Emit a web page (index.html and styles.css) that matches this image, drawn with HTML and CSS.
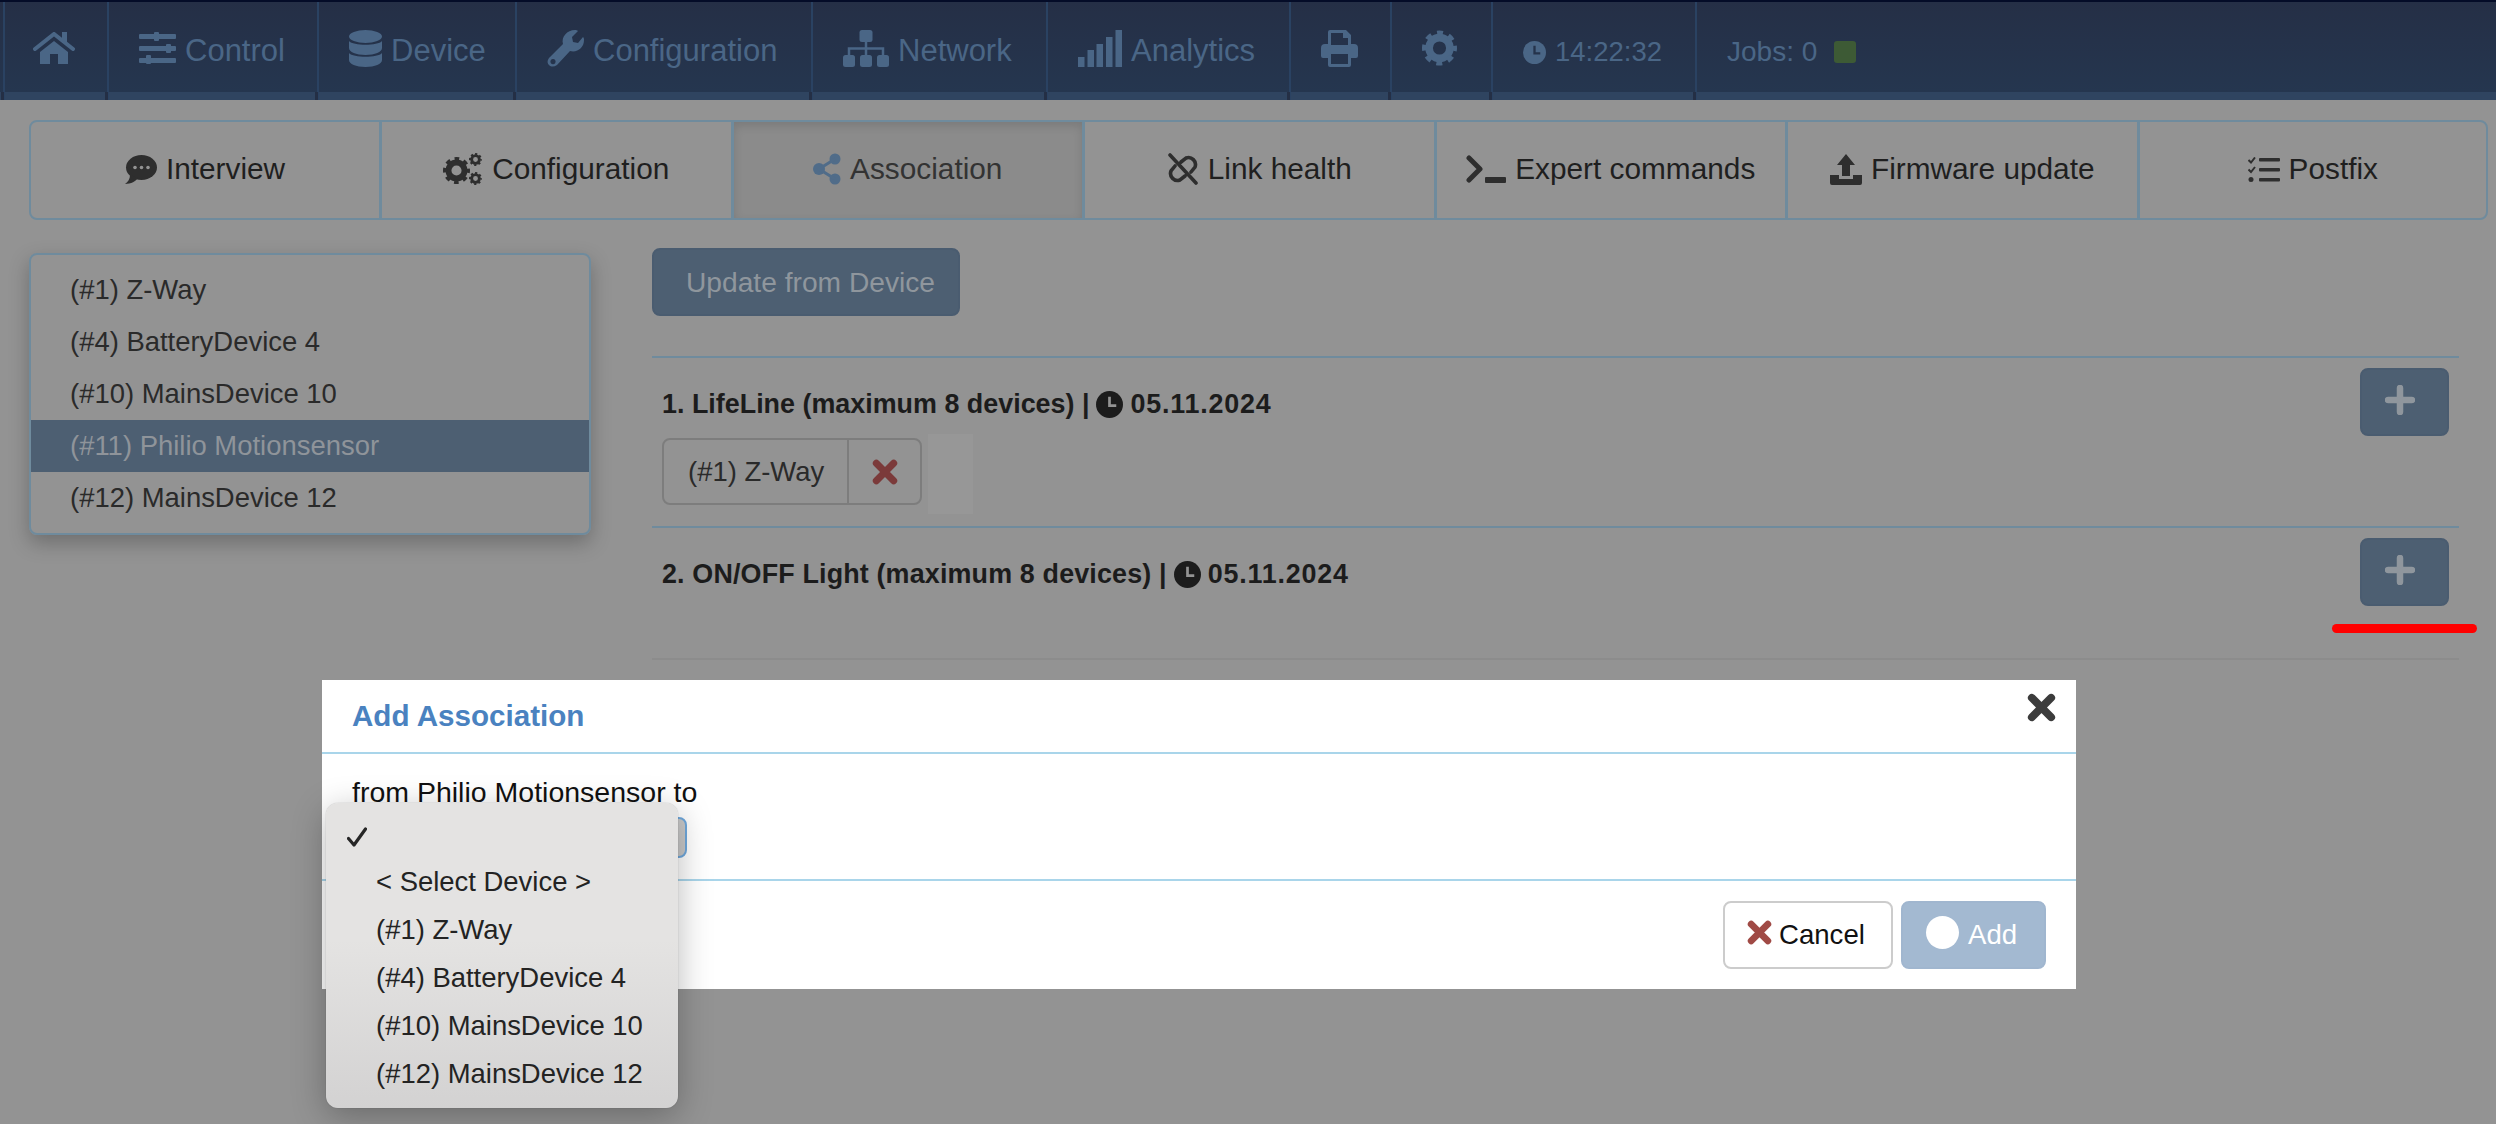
FILE: index.html
```html
<!DOCTYPE html>
<html lang="en">
<head>
<meta charset="utf-8">
<title>Association</title>
<link rel="stylesheet" href="styles.css">
</head>
<body>
<svg class="defs" aria-hidden="true">
  <defs>
    <symbol id="gear" viewBox="0 0 32 32">
      <circle cx="16" cy="16" r="9.5" fill="none" stroke="currentColor" stroke-width="7"/>
      <circle cx="16" cy="16" r="13.5" fill="none" stroke="currentColor" stroke-width="5" stroke-dasharray="5.3 5.3" stroke-dashoffset="2.6"/>
    </symbol>
    <symbol id="cross" viewBox="0 0 24 24">
      <path d="M4 4 L20 20 M20 4 L4 20" fill="none" stroke="currentColor" stroke-width="6.5" stroke-linecap="round"/>
    </symbol>
    <symbol id="plus" viewBox="0 0 30 30">
      <path d="M15 3 V27 M3 15 H27" fill="none" stroke="currentColor" stroke-width="6.5" stroke-linecap="round"/>
    </symbol>
  </defs>
</svg>

<header class="navbar">
  <a class="nav-item nav-home">
    <svg class="ic ic-home" viewBox="0 0 42 32"><path d="M2 17 L21 2 L40 17" fill="none" stroke="currentColor" stroke-width="4" stroke-linecap="round"/><rect x="29" y="0" width="5" height="11" fill="currentColor"/><path d="M7 20 L21 9 L35 20 V32 H25 V22 H17 V32 H7 Z" fill="currentColor"/></svg>
  </a>
  <a class="nav-item">
    <svg class="ic ic-sliders" viewBox="0 0 37 32"><g fill="currentColor"><rect x="0" y="2" width="37" height="5" rx="1"/><rect x="0" y="14" width="37" height="5" rx="1"/><rect x="0" y="26" width="37" height="5" rx="1"/><rect x="15" y="0" width="5" height="9" rx="1"/><rect x="27" y="12" width="5" height="9" rx="1"/><rect x="7" y="23" width="5" height="9" rx="1"/></g></svg>
    Control
  </a>
  <a class="nav-item">
    <svg class="ic ic-db" viewBox="0 0 33 37"><g fill="currentColor"><ellipse cx="16.5" cy="6.5" rx="16.5" ry="6.5"/><path d="M0 11 C4 16 29 16 33 11 V18 C33 22 26 25 16.5 25 S0 22 0 18 Z"/><path d="M0 23 C4 28 29 28 33 23 V30 C33 34 26 37 16.5 37 S0 34 0 30 Z"/></g></svg>
    Device
  </a>
  <a class="nav-item">
    <svg class="ic ic-wrench" viewBox="0 0 37 37"><path fill="currentColor" fill-rule="evenodd" d="M3 27 L16 14 C14 7 20 0 28 0 C29 0 30 0 31 1 L25 7 L26 12 L31 13 L36 7 C37 8 37 9 37 10 C37 18 30 23 23 21 L10 35 C7 37 4 37 2 35 C0 33 0 30 3 27 Z M6 29 A2.6 2.6 0 1 0 6.01 29 Z"/></svg>
    Configuration
  </a>
  <a class="nav-item">
    <svg class="ic ic-sitemap" viewBox="0 0 46 37"><g fill="currentColor"><rect x="16.500" y="0" width="13" height="12" rx="2.500"/><rect x="0" y="25" width="12" height="12" rx="2.500"/><rect x="17" y="25" width="12" height="12" rx="2.500"/><rect x="34" y="25" width="12" height="12" rx="2.500"/></g><path d="M23 12 V25 M6 25 V18.500 H40 V25" fill="none" stroke="currentColor" stroke-width="2.500"/></svg>
    Network
  </a>
  <a class="nav-item">
    <svg class="ic ic-signal" viewBox="0 0 44 37"><g fill="currentColor"><rect x="0" y="27" width="6.500" height="10"/><rect x="9.500" y="20" width="6.500" height="17"/><rect x="18.500" y="14" width="6.500" height="23"/><rect x="28" y="7" width="6.500" height="30"/><rect x="37.500" y="0" width="6.500" height="37"/></g></svg>
    Analytics
  </a>
  <a class="nav-item">
    <svg class="ic ic-print" viewBox="0 0 37 37"><path fill="currentColor" fill-rule="evenodd" d="M7 2 A2 2 0 0 1 9 0 H25 L30 5 V14 H33 A4 4 0 0 1 37 18 V26 A2 2 0 0 1 35 28 H30 V35 A2 2 0 0 1 28 37 H9 A2 2 0 0 1 7 35 V28 H2 A2 2 0 0 1 0 26 V18 A4 4 0 0 1 4 14 H7 Z M10 3 V15 H27 V8 H22 V3 Z M10 24 V34 H27 V24 Z"/></svg>
  </a>
  <a class="nav-item">
    <svg class="ic ic-gear"><use href="#gear"/></svg>
  </a>
  <div class="nav-item nav-clock">
    <svg class="ic ic-clock" viewBox="0 0 24 24"><circle cx="12" cy="12" r="12" fill="currentColor"/><path d="M12 5 V13 H18" class="hand-nav"/></svg>
    14:22:32
  </div>
  <div class="nav-item nav-jobs">Jobs: 0 <span class="job-led"></span></div>
</header>

<nav class="tabs">
  <a class="tab">
    <svg class="ic ic-comment" viewBox="0 0 32 29"><ellipse cx="16.500" cy="12.500" rx="15.500" ry="12.500" fill="currentColor"/><path d="M5 20 C5 24 3 27 0 29 C6 29 11 26 13 23 Z" fill="currentColor"/><g class="dots"><circle cx="10" cy="12.500" r="1.800"/><circle cx="16.500" cy="12.500" r="1.800"/><circle cx="23" cy="12.500" r="1.800"/></g></svg>
    Interview
  </a>
  <a class="tab">
    <svg class="ic ic-cogs" viewBox="0 0 40 32"><use href="#gear" x="0" y="4" width="27" height="27"/><use href="#gear" x="26" y="0" width="13" height="13"/><use href="#gear" x="26" y="19" width="13" height="13"/></svg>
    Configuration
  </a>
  <a class="tab tab-active">
    <svg class="ic ic-share" viewBox="0 0 28 32"><g fill="currentColor"><circle cx="22" cy="6" r="5.500"/><circle cx="6" cy="16" r="6"/><circle cx="22" cy="26" r="5.500"/></g><path d="M22 6 L6 16 L22 26" fill="none" stroke="currentColor" stroke-width="3"/></svg>
    Association
  </a>
  <a class="tab">
    <svg class="ic ic-unlink" viewBox="0 0 32 32"><path d="M3 2 L29 30 M14 9 L19 5 A7 7 0 0 1 28 14 L24 19 M18 23 L13 27 A7 7 0 0 1 4 18 L8 13" fill="none" stroke="currentColor" stroke-width="3.600" stroke-linecap="round"/></svg>
    Link health
  </a>
  <a class="tab">
    <svg class="ic ic-terminal" viewBox="0 0 40 28"><path d="M3 3 L14 14 L3 25" fill="none" stroke="currentColor" stroke-width="5" stroke-linecap="round" stroke-linejoin="round"/><rect x="19" y="22" width="21" height="6" rx="1" fill="currentColor"/></svg>
    Expert commands
  </a>
  <a class="tab">
    <svg class="ic ic-upload" viewBox="0 0 32 31"><path fill="currentColor" d="M16 0 L25 11 H20 V22 H12 V11 H7 Z"/><path fill="currentColor" d="M0 21 H9 V25 H23 V21 H32 V29 A2 2 0 0 1 30 31 H2 A2 2 0 0 1 0 29 Z"/></svg>
    Firmware update
  </a>
  <a class="tab">
    <svg class="ic ic-tasks" viewBox="0 0 32 25"><g fill="currentColor"><rect x="11" y="1" width="21" height="3.600" rx="1"/><rect x="11" y="11" width="21" height="3.600" rx="1"/><rect x="11" y="21" width="21" height="3.600" rx="1"/><circle cx="3" cy="22.500" r="2.500"/></g><path d="M0.500 3 L3 5.500 L7 0.500 M0.500 12.500 L3 15 L7 10" fill="none" stroke="currentColor" stroke-width="2"/></svg>
    Postfix
  </a>
</nav>

<main class="content">
  <aside class="devices">
    <ul class="device-list">
      <li>(#1) Z-Way</li>
      <li>(#4) BatteryDevice 4</li>
      <li>(#10) MainsDevice 10</li>
      <li class="selected">(#11) Philio Motionsensor</li>
      <li>(#12) MainsDevice 12</li>
    </ul>
  </aside>
  <section class="groups">
    <button class="btn-primary btn-update">Update from Device</button>
    <div class="group group-filled">
      <div class="group-title">1. LifeLine (maximum 8 devices) | <svg class="ic ic-stamp" viewBox="0 0 24 24"><circle cx="12" cy="12" r="12" fill="currentColor"/><path d="M12 5 V13 H18" class="hand-dim"/></svg> <span class="date">05.11.2024</span></div>
      <button class="btn-primary btn-add"><svg class="ic ic-plus"><use href="#plus"/></svg></button>
      <div class="chips">
        <div class="chip">
          <span class="chip-label">(#1) Z-Way</span>
          <span class="chip-remove"><svg class="ic ic-chip-x"><use href="#cross"/></svg></span>
        </div>
        <div class="chip-ghost"></div>
      </div>
    </div>
    <div class="group group-empty">
      <div class="group-title">2. ON/OFF Light (maximum 8 devices) | <svg class="ic ic-stamp" viewBox="0 0 24 24"><circle cx="12" cy="12" r="12" fill="currentColor"/><path d="M12 5 V13 H18" class="hand-dim"/></svg> <span class="date">05.11.2024</span></div>
      <button class="btn-primary btn-add"><svg class="ic ic-plus"><use href="#plus"/></svg></button>
      <div class="red-mark"></div>
    </div>
  </section>
</main>

<div class="modal">
  <div class="modal-head">
    <h3 class="modal-title">Add Association</h3>
    <svg class="ic ic-close"><use href="#cross"/></svg>
  </div>
  <div class="modal-body">
    <p class="modal-text">from Philio Motionsensor to</p>
    <div class="select-box"></div>
  </div>
  <div class="modal-foot">
    <button class="btn-cancel"><svg class="ic ic-cancel"><use href="#cross"/></svg>Cancel</button>
    <button class="btn-confirm"><span class="spinner"></span>Add</button>
  </div>
  <ul class="popup">
    <li class="popup-check"><svg class="ic ic-check" viewBox="0 0 20 20"><path d="M1.500 11.500 L7 18 L18.500 2" fill="none" stroke="currentColor" stroke-width="3.200" stroke-linecap="round" stroke-linejoin="round"/></svg></li>
    <li>&lt; Select Device &gt;</li>
    <li>(#1) Z-Way</li>
    <li>(#4) BatteryDevice 4</li>
    <li>(#10) MainsDevice 10</li>
    <li>(#12) MainsDevice 12</li>
  </ul>
</div>
</body>
</html>
```
FILE: styles.css
```css
* { box-sizing: border-box; }
html, body { margin: 0; padding: 0; }
body {
  width: 2496px;
  height: 1124px;
  position: relative;
  overflow: hidden;
  background: #939393;
  font-family: "Liberation Sans", Arial, sans-serif;
  color: #1f1f1f;
}
.defs { position: absolute; width: 0; height: 0; }
.ic { display: block; flex: none; }

/* navbar */
.navbar {
  height: 100px;
  display: grid;
  grid-template-columns: 104px 210px 198px 296px 235px 243px 101px 101px 204px 1fr;
  padding-left: 3px;
  border-top: 2px solid #040c28;
  background: linear-gradient(#252f46 0, #25364f 90px, #2f4460 90px);
  color: #4a6686;
  font-size: 31px;
}
.nav-item {
  position: relative;
  display: flex;
  align-items: center;
  gap: 9px;
  padding: 0 0 1px 30px;
  border-left: 2px solid #2a4262;
  white-space: nowrap;
}
.nav-item .ic { margin-top: -5px; }
.nav-item::after {
  content: "";
  position: absolute;
  left: -4px;
  bottom: 0;
  width: 3px;
  height: 8px;
  background: #242f45;
}
.nav-home { padding-left: 28px; }
.nav-clock { font-size: 27.5px; padding-top: 3px; }
.nav-clock .ic { margin-top: 0; }
.nav-jobs { font-size: 28px; padding-top: 3px; gap: 17px; }
.job-led {
  width: 22px;
  height: 22px;
  border-radius: 3px;
  background: #3d5a35;
}
.ic-home { width: 42px; height: 32px; }
.ic-sliders { width: 37px; height: 32px; }
.ic-db { width: 33px; height: 37px; }
.ic-wrench { width: 37px; height: 37px; }
.ic-sitemap { width: 46px; height: 37px; }
.ic-signal { width: 44px; height: 37px; }
.ic-print { width: 37px; height: 37px; }
.ic-gear { width: 35px; height: 36px; }
.ic-clock { width: 23px; height: 23px; }
.hand-nav { fill: none; stroke: #25334b; stroke-width: 2.4; }

/* tabs */
.tabs {
  display: grid;
  grid-template-columns: 351px repeat(5, 351.500px) 1fr;
  width: 2459px;
  height: 100px;
  margin: 20px 0 0 29px;
  border: 2px solid #6f8b9d;
  border-radius: 8px;
  overflow: hidden;
  font-size: 29.8px;
  color: #1f1f1f;
}
.tab {
  display: flex;
  align-items: center;
  justify-content: center;
  gap: 9px;
  padding-bottom: 2px;
  border-right: 3px solid #6f8b9d;
}
.tab:last-child { border-right: 0; }
.tab-active {
  background: #8b8b8b;
  box-shadow: inset 0 4px 10px rgba(0,0,0,.12);
  color: #333;
}
.tab .ic { color: #2e2e2e; }
.tab-active .ic-share { color: #506c89; }
.ic-comment { width: 32px; height: 29px; }
.dots { fill: #939393; }
.ic-cogs { width: 40px; height: 32px; }
.ic-share { width: 28px; height: 32px; }
.ic-unlink { width: 32px; height: 32px; }
.ic-terminal { width: 40px; height: 28px; }
.ic-upload { width: 32px; height: 31px; }
.ic-tasks { width: 32px; height: 25px; }

/* content */
.content {
  display: flex;
  gap: 61px;
  padding: 28px 37px 0 29px;
}
.devices { flex: 0 0 562px; padding-top: 5px; }
.device-list {
  list-style: none;
  margin: 0;
  padding: 9px 0;
  border: 2px solid #6f8b9d;
  border-radius: 8px;
  box-shadow: 0 8px 20px rgba(0,0,0,.25);
  font-size: 27.45px;
}
.device-list li {
  height: 52px;
  line-height: 52px;
  padding-left: 39px;
  color: #2a2a2a;
}
.device-list .selected { background: #4d5f72; color: #8f949a; }

.groups { flex: 1; min-width: 0; }
.btn-primary {
  display: flex;
  align-items: center;
  justify-content: center;
  border: 2px solid #4a5c70;
  border-radius: 8px;
  background: #4d5f72;
  color: #8f969d;
  font: inherit;
  padding: 0;
}
.btn-update { width: 308px; height: 68px; font-size: 28.2px; margin-bottom: 40px; padding-left: 9px; }
.group {
  display: grid;
  grid-template-columns: 1fr auto;
  align-content: start;
  padding: 10px 10px 0;
  border-top: 2px solid #6f8b9d;
}
.group-filled { height: 170px; }
.group-empty {
  position: relative;
  height: 134px;
  border-bottom: 2px solid #8c8c8c;
}
.group-title {
  display: flex;
  align-items: center;
  gap: 7px;
  height: 68px;
  padding-top: 4px;
  font-size: 26.9px;
  font-weight: 700;
  color: #1c1c1c;
}
.group-empty .group-title { letter-spacing: .15px; }
.date { letter-spacing: .8px; }
.group-empty .date { letter-spacing: .8px; }
.ic-stamp { width: 27px; height: 27px; color: #1c1c1c; }
.hand-dim { fill: none; stroke: #939393; stroke-width: 2.4; }
.btn-add { width: 89px; height: 68px; padding: 0 9px 5px 0; }
.ic-plus { width: 30px; height: 30px; color: #8f969d; }
.chips { display: flex; align-items: center; grid-column: 1 / 3; margin-top: -2px; }
.chip {
  display: flex;
  width: 260px;
  height: 67px;
  margin-bottom: 5px;
  border: 2px solid #7d7d7d;
  border-radius: 8px;
  font-size: 27.45px;
  color: #2a2a2a;
}
.chip-label {
  display: flex;
  align-items: center;
  width: 185px;
  padding-left: 24px;
  border-right: 2px solid #7d7d7d;
}
.chip-remove { flex: 1; display: flex; align-items: center; justify-content: center; }
.ic-chip-x { width: 26px; height: 26px; color: #7b3a3a; }
.chip-ghost { width: 45px; height: 80px; margin-left: 6px; background: #979797; }
.red-mark {
  position: absolute;
  left: 1680px;
  top: 96px;
  width: 145px;
  height: 9px;
  border-radius: 5px;
  background: #ff0000;
}

/* modal */
.modal {
  position: absolute;
  left: 322px;
  top: 680px;
  width: 1754px;
  height: 309px;
  background: #fff;
  color: #111;
}
.modal-head {
  display: flex;
  justify-content: space-between;
  height: 74px;
  padding: 0 20px 0 30px;
  border-bottom: 2px solid #a9d5ea;
}
.modal-title {
  margin: 0;
  padding-top: 19px;
  font-size: 29.6px;
  line-height: 34px;
  font-weight: 700;
  color: #4a82c0;
}
.ic-close { width: 29px; height: 29px; margin-top: 13px; color: #3c3c3c; }
.modal-body {
  height: 127px;
  padding: 0 30px;
  border-bottom: 2px solid #a9d5ea;
}
.modal-text { margin: 0; padding-top: 22px; font-size: 28.5px; line-height: 32px; }
.select-box {
  width: 335px;
  height: 41px;
  margin-top: 9px;
  border: 2px solid #6fa8dc;
  border-radius: 8px;
  background: #c9c9c9;
}
.modal-foot {
  display: flex;
  justify-content: flex-end;
  gap: 8px;
  padding: 20px 30px 0 0;
}
.btn-cancel, .btn-confirm {
  display: flex;
  align-items: center;
  height: 68px;
  padding: 0;
  border-radius: 8px;
  font: 27.6px "Liberation Sans", Arial, sans-serif;
}
.btn-cancel {
  width: 170px;
  padding-left: 22px;
  gap: 7px;
  border: 2px solid #ccc;
  background: #fff;
  color: #111;
}
.ic-cancel { width: 25px; height: 25px; margin-top: -5px; color: #a04a45; }
.btn-confirm {
  width: 145px;
  padding-left: 23px;
  gap: 9px;
  border: 2px solid #a0b6cf;
  background: #a3b9d1;
  color: #fff;
}
.spinner { width: 33px; height: 33px; margin-top: -6px; border-radius: 50%; background: #fff; }

/* native select popup */
.popup {
  position: absolute;
  left: 4px;
  top: 123px;
  width: 352px;
  height: 305px;
  margin: 0;
  padding: 7px 0 10px;
  list-style: none;
  border-radius: 12px;
  background: linear-gradient(#e4e3e2 0, #e4e3e2 45%, #d3d2d2 100%);
  box-shadow: 0 0 1px rgba(0,0,0,.4), 0 8px 34px rgba(0,0,0,.28);
  font-size: 27.45px;
  color: #232323;
}
.popup li {
  display: flex;
  align-items: center;
  height: 48px;
  padding-left: 50px;
  white-space: nowrap;
}
.popup .popup-check { padding: 5px 0 0 21px; }
.ic-check { width: 20px; height: 20px; color: #262626; }
```
